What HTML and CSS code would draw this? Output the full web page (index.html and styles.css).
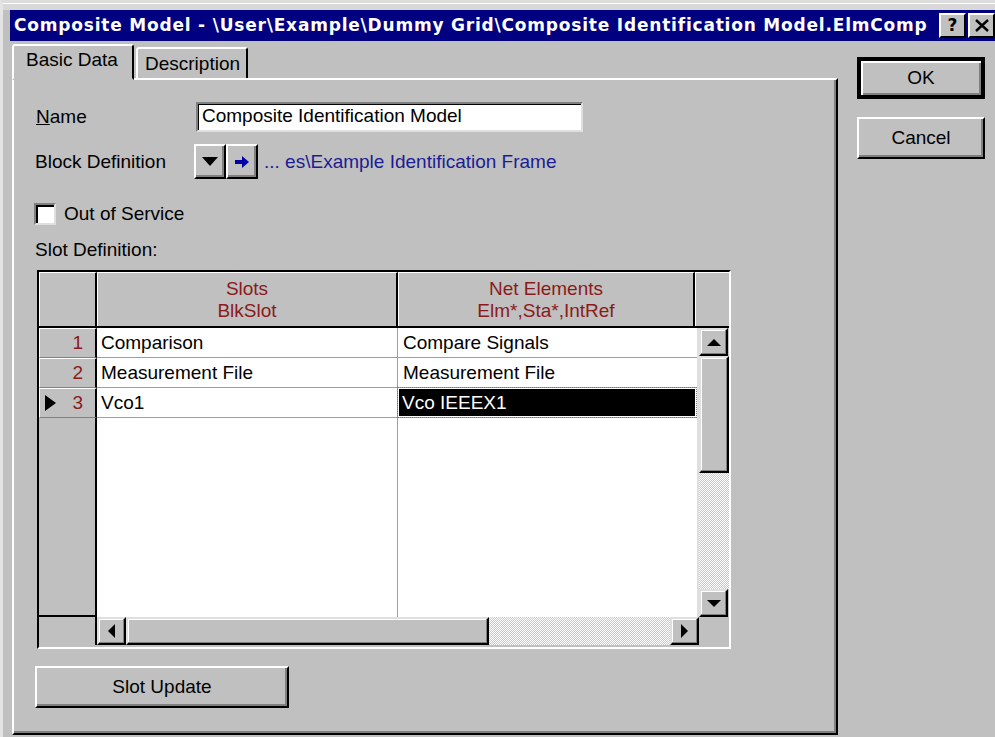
FILE: index.html
```html
<!DOCTYPE html>
<html>
<head>
<meta charset="utf-8">
<title>Composite Model</title>
<link rel="stylesheet" href="styles.css">
</head>
<body>
<div class="window">
  <div class="titlebar">
    <span class="title">Composite Model - \User\Example\Dummy Grid\Composite Identification Model.ElmComp</span>
    <div class="tb-btns">
      <span class="tb-btn">?</span>
      <span class="tb-btn tb-close">
        <svg width="14" height="13" viewBox="0 0 14 13"><path d="M1 1 L13 12 M13 1 L1 12" stroke="#000" stroke-width="2.4"/></svg>
      </span>
    </div>
  </div>

  <div class="body">
    <div class="main">
      <div class="tabs">
        <div class="tab active">Basic Data</div>
        <div class="tab">Description</div>
      </div>

      <div class="panel">
        <div class="field-row name-row">
          <span class="label"><u>N</u>ame</span>
          <div class="textbox">Composite Identification Model</div>
        </div>

        <div class="field-row block-row">
          <span class="label">Block Definition</span>
          <span class="sbtn">
            <svg width="16" height="10" viewBox="0 0 16 10"><path d="M0 0 H16 L8 9 Z" fill="#000"/></svg>
          </span>
          <span class="sbtn">
            <svg width="14" height="12" viewBox="0 0 14 12"><path d="M0 4 H7 V0 L14 6 L7 12 V8 H0 Z" fill="#0000a8"/></svg>
          </span>
          <span class="link">... es\Example Identification Frame</span>
        </div>

        <div class="check-row">
          <span class="checkbox"></span>
          <span>Out of Service</span>
        </div>

        <div class="section-label">Slot Definition:</div>

        <div class="grid">
          <div class="ghead">
            <div class="hcell corner"></div>
            <div class="hcell col1"><span>Slots</span><span>BlkSlot</span></div>
            <div class="hcell col2"><span>Net Elements</span><span>Elm*,Sta*,IntRef</span></div>
            <div class="hcell filler"></div>
          </div>

          <div class="gbody">
            <div class="cells">
              <div class="grow">
                <div class="rh"><span class="num">1</span></div>
                <div class="cell col1">Comparison</div>
                <div class="cell col2">Compare Signals</div>
              </div>
              <div class="grow">
                <div class="rh"><span class="num">2</span></div>
                <div class="cell col1">Measurement File</div>
                <div class="cell col2">Measurement File</div>
              </div>
              <div class="grow">
                <div class="rh current"><span class="marker"></span><span class="num">3</span></div>
                <div class="cell col1">Vco1</div>
                <div class="cell col2 selected"><span>Vco IEEEX1</span></div>
              </div>
              <div class="gfill">
                <div class="rh-fill"></div>
                <div class="cell-fill col1"></div>
                <div class="cell-fill col2"></div>
              </div>
            </div>

            <div class="vscroll">
              <span class="sb-btn"><span class="tri up"></span></span>
              <span class="sb-thumb v"></span>
              <span class="sb-track"></span>
              <span class="sb-btn"><span class="tri down"></span></span>
            </div>
          </div>

          <div class="gfoot">
            <div class="foot-corner"></div>
            <div class="hscroll">
              <span class="sb-btn"><span class="tri left"></span></span>
              <span class="sb-thumb h"></span>
              <span class="sb-track"></span>
              <span class="sb-btn"><span class="tri right"></span></span>
            </div>
            <div class="foot-end"></div>
          </div>
        </div>

        <div class="btn slot-btn">Slot Update</div>
      </div>
    </div>

    <div class="side">
      <div class="btn default">OK</div>
      <div class="btn">Cancel</div>
    </div>
  </div>
</div>
</body>
</html>
```

FILE: styles.css
```css
* {
  box-sizing: border-box;
}

html, body {
  margin: 0;
  padding: 0;
}

body {
  width: 995px;
  height: 737px;
  overflow: hidden;
  background: #c0c0c0;
  font-family: "Liberation Sans", Arial, sans-serif;
  font-size: 19px;
  color: #000;
}

/* ---------- window frame ---------- */
.window {
  width: 995px;
  height: 737px;
  padding: 9px 0 0 10px;
  background: #c0c0c0;
  border-top: 3px solid #dcdcdc;
  border-left: 3px solid #e4e4e4;
  position: relative;
}

.window::before {
  content: "";
  position: absolute;
  left: 0;
  top: 0;
  right: 0;
  height: 6px;
  background: #d8d8d8;
  border-top: 1px solid #fff;
}

.titlebar {
  height: 32px;
  margin-top: -3px;
  background: #000080;
  display: flex;
  align-items: center;
  justify-content: space-between;
  padding-left: 4px;
  margin-left: -3px;
}

.title {
  color: #fff;
  font-family: "DejaVu Sans", sans-serif;
  font-weight: bold;
  font-size: 17px;
  white-space: nowrap;
  letter-spacing: 0.8px;
}

.tb-btns {
  display: flex;
  gap: 2px;
  align-self: stretch;
  align-items: center;
}

.tb-btn {
  width: 27px;
  height: 25px;
  background: #c0c0c0;
  border-top: 2px solid #fff;
  border-left: 2px solid #fff;
  border-right: 2px solid #000;
  border-bottom: 2px solid #000;
  display: flex;
  align-items: center;
  justify-content: center;
  font-family: "DejaVu Sans", sans-serif;
  font-weight: bold;
  font-size: 17px;
  line-height: 1;
}

/* ---------- body ---------- */
.body {
  display: flex;
  padding-top: 2px;
  margin-left: -1px;
}

.main {
  width: 826px;
  display: flex;
  flex-direction: column;
}

.tabs {
  display: flex;
  align-items: flex-end;
  height: 35px;
  position: relative;
  z-index: 2;
}

.tab {
  height: 31px;
  padding: 0 6px 0 7px;
  display: flex;
  align-items: center;
  border-top: 2px solid #fff;
  border-left: 2px solid #fff;
  border-right: 2px solid #000;
  border-radius: 3px 3px 0 0;
  margin-left: 2px;
  background: #c0c0c0;
}

.tab.active {
  height: 36px;
  padding: 0 8px 4px 12px;
  margin-left: 0;
  margin-bottom: -2px;
  border-bottom: 2px solid #c0c0c0;
  width: 122px;
}

.panel {
  height: 657px;
  border-top: 2px solid #fff;
  border-left: 2px solid #fff;
  border-right: 2px solid #000;
  border-bottom: 2px solid #000;
  box-shadow: inset -2px -2px #808080;
  padding: 22px 0 0 21px;
  display: flex;
  flex-direction: column;
}

.field-row {
  display: flex;
  align-items: center;
}

.label {
  width: 160px;
}

.name-row {
  height: 30px;
}

.name-row .label {
  margin-left: 1px;
}

.textbox {
  width: 387px;
  height: 30px;
  background: #fff;
  border-top: 2px solid #808080;
  border-left: 2px solid #808080;
  border-right: 2px solid #dfdfdf;
  border-bottom: 2px solid #dfdfdf;
  box-shadow: inset 1px 1px #000;
  padding: 1px 0 0 4px;
  white-space: nowrap;
}

.block-row {
  margin-top: 12px;
  height: 35px;
}

.block-row .label {
  width: 159px;
}

.sbtn {
  width: 32px;
  height: 35px;
  background: #c0c0c0;
  border-top: 2px solid #fff;
  border-left: 2px solid #fff;
  border-right: 2px solid #000;
  border-bottom: 2px solid #000;
  box-shadow: inset -2px -2px #808080;
  display: flex;
  align-items: center;
  justify-content: center;
}

.link {
  color: #1c1c94;
  margin-left: 6px;
}

.check-row {
  margin-top: 24px;
  display: flex;
  align-items: center;
  height: 22px;
  gap: 8px;
}

.checkbox {
  width: 22px;
  height: 22px;
  background: #fff;
  border-top: 2px solid #808080;
  border-left: 2px solid #808080;
  border-right: 2px solid #dfdfdf;
  border-bottom: 2px solid #dfdfdf;
  box-shadow: inset 2px 2px #000;
  margin-left: -1px;
}

.section-label {
  margin-top: 14px;
  height: 22px;
  line-height: 22px;
}

/* ---------- slot grid ---------- */
.grid {
  margin-top: 9px;
  margin-left: 2px;
  width: 694px;
  height: 379px;
  border-top: 2px solid #000;
  border-left: 2px solid #000;
  border-right: 2px solid #fff;
  border-bottom: 2px solid #fff;
  background: #c0c0c0;
  display: flex;
  flex-direction: column;
}

.ghead {
  height: 56px;
  display: flex;
  border-bottom: 2px solid #000;
}

.hcell {
  height: 100%;
  background: #c0c0c0;
  border-top: 1px solid #fff;
  border-left: 1px solid #fff;
  border-right: 2px solid #000;
  display: flex;
  flex-direction: column;
  align-items: center;
  justify-content: center;
  color: #8b1a1a;
  line-height: 22px;
}

.hcell.corner {
  width: 58px;
}

.hcell.col1 {
  width: 301px;
}

.hcell.col2 {
  width: 297px;
}

.hcell.filler {
  flex: 1;
  border-right: none;
}

.gbody {
  height: 289px;
  display: flex;
}

.cells {
  width: 660px;
  display: flex;
  flex-direction: column;
  background: #fff;
  border-right: 2px solid #dfdfdf;
}

.grow {
  height: 30px;
  display: flex;
  border-bottom: 1px solid #a0a0a0;
}

.rh {
  width: 58px;
  flex: none;
  background: #c0c0c0;
  border-top: 1px solid #fff;
  border-left: 1px solid #fff;
  border-bottom: 1px solid #808080;
  border-right: 2px solid #000;
  display: flex;
  align-items: center;
  justify-content: flex-end;
  padding-right: 12px;
  color: #8b1a1a;
  position: relative;
}

.grow .rh {
  margin-bottom: -1px;
}

.marker {
  position: absolute;
  left: 5px;
  top: 6px;
  width: 0;
  height: 0;
  border-top: 8px solid transparent;
  border-bottom: 8px solid transparent;
  border-left: 11px solid #000;
}

.cell {
  display: flex;
  align-items: center;
  padding-left: 4px;
  white-space: nowrap;
}

.cell.col1 {
  width: 301px;
  border-right: 1px solid #a0a0a0;
}

.cell.col2 {
  flex: 1;
  padding-left: 5px;
}

.cell.selected {
  padding: 1px;
  border: 1px dotted #777;
  margin: -1px 0 -1px -1px;
}

.cell.selected span {
  flex: 1;
  align-self: stretch;
  background: #000;
  color: #fff;
  display: flex;
  align-items: center;
  padding-left: 3px;
}

.gfill {
  flex: 1;
  display: flex;
}

.rh-fill {
  width: 58px;
  background: #c0c0c0;
  border-right: 2px solid #000;
  border-bottom: 2px solid #000;
}

.cell-fill.col1 {
  width: 301px;
  border-right: 1px solid #a0a0a0;
}

/* ---------- scrollbars ---------- */
.vscroll {
  flex: 1;
  display: flex;
  flex-direction: column;
}

.sb-btn {
  flex: none;
  width: 29px;
  height: 28px;
  background: #c0c0c0;
  border-top: 2px solid #dfdfdf;
  border-left: 2px solid #dfdfdf;
  border-right: 2px solid #000;
  border-bottom: 2px solid #000;
  box-shadow: inset -1px -1px #808080, inset 1px 1px #fff;
  display: flex;
  align-items: center;
  justify-content: center;
}

.sb-thumb {
  flex: none;
  background: #c0c0c0;
  border-top: 2px solid #dfdfdf;
  border-left: 2px solid #dfdfdf;
  border-right: 2px solid #000;
  border-bottom: 2px solid #000;
  box-shadow: inset -1px -1px #808080, inset 1px 1px #fff;
}

.sb-thumb.v {
  height: 117px;
}

.sb-thumb.h {
  width: 363px;
  height: 28px;
}

.sb-track {
  flex: 1;
  background-color: #fff;
  background-image: repeating-conic-gradient(#c8c8c8 0 25%, #fff 0 50%);
  background-size: 2px 2px;
}

.tri {
  width: 0;
  height: 0;
}

.tri.up {
  border-left: 7px solid transparent;
  border-right: 7px solid transparent;
  border-bottom: 7px solid #000;
}

.tri.down {
  border-left: 7px solid transparent;
  border-right: 7px solid transparent;
  border-top: 7px solid #000;
}

.tri.left {
  border-top: 7px solid transparent;
  border-bottom: 7px solid transparent;
  border-right: 7px solid #000;
}

.tri.right {
  border-top: 7px solid transparent;
  border-bottom: 7px solid transparent;
  border-left: 7px solid #000;
}

.gfoot {
  height: 28px;
  display: flex;
}

.foot-corner {
  width: 58px;
  border-right: 2px solid #000;
}

.hscroll {
  width: 602px;
  display: flex;
}

.foot-end {
  flex: 1;
}

/* ---------- push buttons ---------- */
.btn {
  background: #c0c0c0;
  border-top: 2px solid #fff;
  border-left: 2px solid #fff;
  border-right: 2px solid #000;
  border-bottom: 2px solid #000;
  box-shadow: inset -2px -2px #808080;
  display: flex;
  align-items: center;
  justify-content: center;
}

.slot-btn {
  margin-top: 17px;
  margin-left: 0;
  width: 254px;
  height: 42px;
  flex: none;
}

.side {
  margin-left: 19px;
  padding-top: 14px;
  display: flex;
  flex-direction: column;
  gap: 18px;
}

.side .btn {
  width: 128px;
  height: 42px;
  flex: none;
}

.side .btn.default {
  border: 4px solid #000;
  box-shadow: inset 2px 2px #fff, inset -2px -2px #808080;
}
```
